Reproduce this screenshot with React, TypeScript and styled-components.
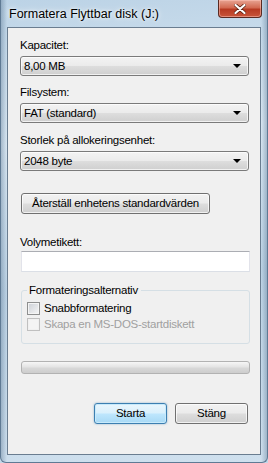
import styled, { createGlobalStyle } from 'styled-components';

const GlobalStyle = createGlobalStyle`
  html, body {
    margin: 0;
    padding: 0;
    background: #c4d8e8;
  }
  * {
    box-sizing: border-box;
  }
`;

const Window = styled.div`
  width: 268px;
  height: 463px;
  display: flex;
  flex-direction: column;
  font-family: 'Liberation Sans', Arial, sans-serif;
  font-size: 11.5px;
  letter-spacing: -0.25px;
  color: #000;
  background:
    linear-gradient(90deg, rgba(70, 100, 130, 0.35) 0, rgba(255, 255, 255, 0) 6px),
    linear-gradient(270deg, rgba(70, 100, 130, 0.35) 0, rgba(255, 255, 255, 0) 6px),
    linear-gradient(175deg, #bcd3e6 0%, #d9e7f2 30%, #bed4e6 60%, #cfe0ee 100%);
  border: 1px solid #5f7a94;
  border-top: none;
  border-radius: 0 0 6px 6px;
  padding: 0 6px 7px 6px;
`;

const TitleBar = styled.div`
  height: 27px;
  display: flex;
  align-items: flex-start;
  justify-content: space-between;
`;

const Title = styled.span`
  margin: 7px 0 0 2px;
  font-size: 12.5px;
  letter-spacing: 0;
  line-height: 15px;
  color: #000;
  text-shadow: 0 0 6px rgba(255, 255, 255, 0.9), 0 0 3px rgba(255, 255, 255, 0.9);
`;

const CloseButton = styled.div`
  width: 44px;
  height: 18px;
  margin-right: -1px;
  border: 1px solid #5a2a22;
  border-top: none;
  border-radius: 0 0 4px 4px;
  background: linear-gradient(180deg, #e8a493 0%, #d26a52 45%, #b73a22 55%, #c8553a 100%);
  box-shadow: inset 0 0 0 1px rgba(255, 200, 190, 0.5);
  display: flex;
  align-items: center;
  justify-content: center;
`;

const Client = styled.div`
  flex: 1;
  background: #f0f0f0;
  border: 1px solid #6a7d90;
  display: flex;
  flex-direction: column;
  padding: 10px 11px 0 12px;
`;

const Label = styled.div<{ $top: number }>`
  line-height: 15px;
  margin-top: ${(p) => p.$top}px;
  white-space: nowrap;
`;

const Combo = styled.div`
  margin-top: 3px;
  height: 20px;
  border: 1px solid #7a7a7a;
  border-radius: 3px;
  background: linear-gradient(180deg, #f3f3f3 0%, #ebebeb 48%, #dddddd 52%, #cfcfcf 100%);
  box-shadow: inset 0 0 0 1px rgba(255, 255, 255, 0.7);
  display: flex;
  align-items: center;
  justify-content: space-between;
  padding: 0 7px 0 3px;
  line-height: 15px;
`;

const Arrow = styled.span`
  width: 0;
  height: 0;
  border-left: 4px solid transparent;
  border-right: 4px solid transparent;
  border-top: 4px solid #000;
`;

const Button = styled.div<{ $default?: boolean; $width: number }>`
  width: ${(p) => p.$width}px;
  height: 21px;
  border: 1px solid ${(p) => (p.$default ? '#3c7fb1' : '#707070')};
  border-radius: 3px;
  background: ${(p) =>
    p.$default
      ? 'linear-gradient(180deg, #eaf6fd 0%, #d9f0fc 48%, #bee6fd 52%, #a7d9f5 100%)'
      : 'linear-gradient(180deg, #f2f2f2 0%, #ebebeb 48%, #dddddd 52%, #cfcfcf 100%)'};
  box-shadow: ${(p) =>
    p.$default
      ? 'inset 0 0 0 1px #c8eafb, 0 0 2px rgba(60, 127, 177, 0.6)'
      : 'inset 0 0 0 1px rgba(255, 255, 255, 0.7)'};
  display: flex;
  align-items: center;
  justify-content: center;
  line-height: 15px;
  white-space: nowrap;
`;

const ResetRow = styled.div`
  margin-top: 22px;
  padding-left: 1px;
`;

const TextInput = styled.div`
  margin-top: 1px;
  height: 21px;
  width: 229px;
  margin-left: 1px;
  background: #fff;
  border: 1px solid #dbdfe6;
  border-top-color: #abadb3;
  border-left-color: #e2e3ea;
  border-right-color: #e2e3ea;
`;

const Group = styled.fieldset`
  margin: 11px 0 0 1px;
  width: 229px;
  height: 61px;
  border: 1px solid #d5dfe5;
  border-radius: 3px;
  padding: 4px 0 0 5px;
  display: flex;
  flex-direction: column;
  gap: 3px;
`;

const Legend = styled.legend`
  padding: 0 3px 0 2px;
  line-height: 15px;
`;

const CheckRow = styled.div<{ $disabled?: boolean }>`
  display: flex;
  align-items: center;
  gap: 4px;
  height: 13px;
  color: ${(p) => (p.$disabled ? '#a0a0a0' : '#000')};
  line-height: 15px;
`;

const Box = styled.span<{ $disabled?: boolean }>`
  width: 13px;
  height: 13px;
  border: 1px solid ${(p) => (p.$disabled ? '#c0c0c0' : '#8e8f8f')};
  background: ${(p) =>
    p.$disabled ? '#f4f4f4' : 'linear-gradient(135deg, #cbcfd5 0%, #f6f6f6 100%)'};
  box-shadow: inset 0 0 0 1px ${(p) => (p.$disabled ? '#f0f0f0' : '#f4f4f4')};
`;

const Progress = styled.div`
  margin: 17px 0 0 1px;
  width: 229px;
  height: 13px;
  border: 1px solid #b2b2b2;
  border-radius: 3px;
  background: linear-gradient(180deg, #f6f6f6 0%, #e4e4e4 45%, #d8d8d8 55%, #cdcdcd 100%);
`;

const ButtonRow = styled.div`
  margin-top: 29px;
  display: flex;
  justify-content: flex-end;
  gap: 8px;
  padding-right: 1px;
`;

export default function App() {
  return (
    <>
      <GlobalStyle />
      <Window>
        <TitleBar>
          <Title>Formatera Flyttbar disk (J:)</Title>
          <CloseButton>
            <svg width="12" height="10" viewBox="0 0 12 10">
              <path d="M1.5 1 L10.5 9 M10.5 1 L1.5 9" stroke="#5a2010" strokeWidth="3.6" strokeLinecap="round" />
              <path d="M1.5 1 L10.5 9 M10.5 1 L1.5 9" stroke="#fff" strokeWidth="2.2" strokeLinecap="round" />
            </svg>
          </CloseButton>
        </TitleBar>
        <Client>
          <Label $top={0}>Kapacitet:</Label>
          <Combo>
            <span>8,00 MB</span>
            <Arrow />
          </Combo>
          <Label $top={9}>Filsystem:</Label>
          <Combo>
            <span>FAT (standard)</span>
            <Arrow />
          </Combo>
          <Label $top={10}>Storlek på allokeringsenhet:</Label>
          <Combo>
            <span>2048 byte</span>
            <Arrow />
          </Combo>
          <ResetRow>
            <Button $width={189}>Återställ enhetens standardvärden</Button>
          </ResetRow>
          <Label $top={21}>Volymetikett:</Label>
          <TextInput />
          <Group>
            <Legend>Formateringsalternativ</Legend>
            <CheckRow>
              <Box />
              <span>Snabbformatering</span>
            </CheckRow>
            <CheckRow $disabled>
              <Box $disabled />
              <span>Skapa en MS-DOS-startdiskett</span>
            </CheckRow>
          </Group>
          <Progress />
          <ButtonRow>
            <Button $default $width={73}>Starta</Button>
            <Button $width={73}>Stäng</Button>
          </ButtonRow>
        </Client>
      </Window>
    </>
  );
}
